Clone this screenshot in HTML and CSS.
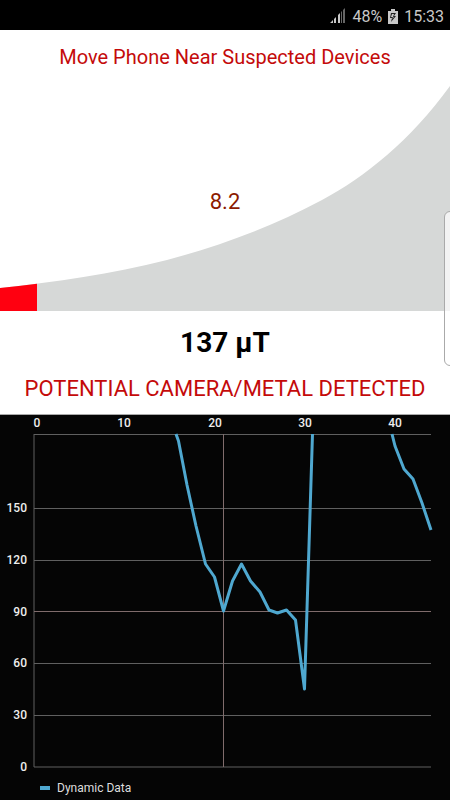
FILE: index.html
```html
<!DOCTYPE html>
<html lang="en">
<head>
    <meta charset="UTF-8">
    <meta name="viewport" content="width=device-width, initial-scale=1.0">
    <title>Device Detector</title>
    <link rel="stylesheet" href="styles.css">
</head>
<body>
    <header class="status-bar">
        <svg class="signal" width="16" height="16" viewBox="0 0 16 16" aria-hidden="true">
            <path d="M0 15l3-3v3zM4 15v-4l2-2v6zM8 15V7l2-2v10z" fill="#c8c8c8"/>
            <path d="M11 15V4l1-1v12zM13 15V2l2-2v15z" fill="#666"/>
        </svg>
        <span>48%</span>
        <svg class="battery" width="10" height="15" viewBox="0 0 10 15" aria-hidden="true">
            <path d="M3 0h4v2h3v13H0V2h3z" fill="#c8c8c8"/>
            <path d="M3 4h5L6 7h2l-5 6 1-4H2z" fill="#222"/>
            <path d="M4 5h2L5 8h1l-2 2 1-2H3z" fill="#c8c8c8"/>
        </svg>
        <time>15:33</time>
    </header>

    <main class="detector">
        <section class="gauge">
            <h1 class="title">Move Phone Near Suspected Devices</h1>
            <svg class="curve" viewBox="0 0 450 225" preserveAspectRatio="none" aria-hidden="true">
                <defs>
                    <clipPath id="level"><rect x="0" y="0" width="37" height="225"/></clipPath>
                </defs>
                <path d="M0 202C56 196 111 188 167 174C219 160 270 142 322 114C365 91 410 55 450 0V225H0Z" fill="#d6d8d7"/>
                <path d="M0 202C56 196 111 188 167 174C219 160 270 142 322 114C365 91 410 55 450 0V225H0Z" fill="#ff0010" clip-path="url(#level)"/>
            </svg>
            <div class="gauge-value">8.2</div>
        </section>

        <section class="reading">
            <div class="field">137 µT</div>
            <div class="alert">POTENTIAL CAMERA/METAL DETECTED</div>
        </section>
        <div class="edge-handle"></div>
    </main>

    <section class="chart">
        <svg class="plot" viewBox="0 0 450 360" role="img" aria-label="Dynamic Data">
            <g class="grid">
                <path d="M34 19.500H431M34 93.500H431M34 145.500H431M34 248.500H431M34 300.500H431M34 352H431"/>
                <path d="M34 19V352"/>
                <path class="highlight" d="M34 196.500H431M223.500 19V352"/>
            </g>
            <g class="x-labels">
                <text x="37" y="12">0</text>
                <text x="124" y="12">10</text>
                <text x="215" y="12">20</text>
                <text x="305" y="12">30</text>
                <text x="395" y="12">40</text>
            </g>
            <g class="y-labels">
                <text x="27" y="97">150</text>
                <text x="27" y="149">120</text>
                <text x="27" y="201">90</text>
                <text x="27" y="252">60</text>
                <text x="27" y="304">30</text>
                <text x="27" y="356">0</text>
            </g>
            <polyline class="series" points="176,19 178.500,26 187,70 196,111 205.500,149 214.500,162 223.500,196 232.500,166 241.500,149 250.500,166 260,177 269,195 277.500,198 286.500,195 295.500,205 304.500,274 312.500,19"/>
            <polyline class="series" points="392,19 395,31 404,54 413,64 422,88 431,115"/>
        </svg>
        <div class="legend"><span class="swatch"></span>Dynamic Data</div>
    </section>
</body>
</html>
```
FILE: styles.css
```css
* {
    box-sizing: border-box;
}

body {
    margin: 0;
    min-height: 100vh;
    background-color: #050505;
    font-family: Roboto, sans-serif;
}

.status-bar {
    display: flex;
    justify-content: flex-end;
    align-items: center;
    gap: 6px;
    height: 30px;
    padding: 2px 6px 0 0;
    background-color: #000;
    color: #c8c8c8;
    font-size: 16px;
}

.detector {
    position: relative;
    overflow: hidden;
    background-color: #fff;
    text-align: center;
}

.gauge {
    position: relative;
}

.title {
    margin: 0;
    padding-top: 13px;
    height: 56px;
    color: #c40a0a;
    font-size: 20px;
    font-weight: 400;
    line-height: 28px;
}

.curve {
    display: block;
    width: 100%;
    height: 225px;
}

.gauge-value {
    position: absolute;
    top: 158px;
    left: 0;
    right: 0;
    color: #8c1a00;
    font-size: 22px;
    line-height: 28px;
}

.reading {
    padding: 16px 0 11px;
    border-bottom: 1px solid #aaa;
}

.field {
    color: #000;
    font-size: 28px;
    font-weight: 700;
    line-height: 32px;
}

.alert {
    margin-top: 16px;
    color: #c40a0a;
    font-size: 22px;
    line-height: 28px;
}

/* edge panel tab, runs off the right side */
.edge-handle {
    position: absolute;
    top: 181px;
    right: -10px;
    width: 16px;
    height: 155px;
    border: 1px solid #aaa;
    border-radius: 6px;
    background-color: rgba(255, 255, 255, 0.7);
}

.plot {
    display: block;
    width: 100%;
}

.grid path {
    fill: none;
    stroke: #606060;
    stroke-width: 1;
}

.grid .highlight {
    stroke: #806c6c;
}

.x-labels,
.y-labels {
    fill: #eee;
    font-size: 12px;
    font-weight: 500;
}

.x-labels {
    text-anchor: middle;
}

.y-labels {
    text-anchor: end;
}

.series {
    fill: none;
    stroke: #4fa8d0;
    stroke-width: 3;
    stroke-linejoin: round;
}

.legend {
    display: flex;
    align-items: center;
    gap: 7px;
    padding: 5px 0 4px 40px;
    color: #ddd;
    font-size: 12px;
    line-height: 16px;
}

.swatch {
    width: 10px;
    height: 4px;
    background-color: #4fa8d0;
}
```
